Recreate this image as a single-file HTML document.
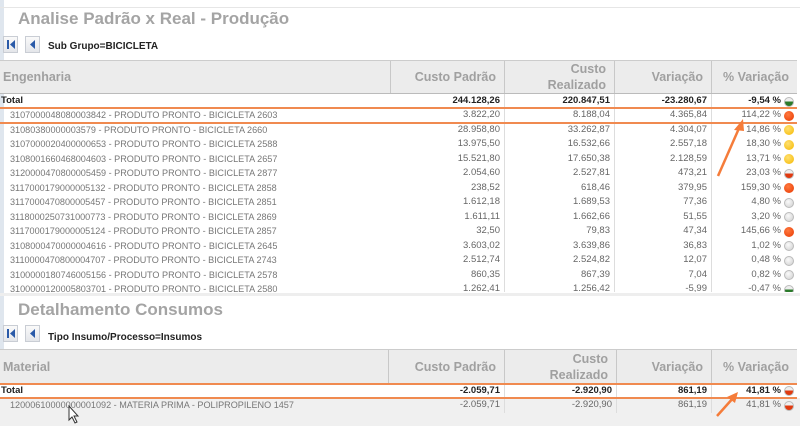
<!DOCTYPE html>
<html><head><meta charset="utf-8"><style>
*{margin:0;padding:0;box-sizing:border-box}
body{width:800px;height:426px;overflow:hidden;background:#fff;font-family:"Liberation Sans",sans-serif;position:relative;color:#666}
.a{position:absolute}
.title{font-family:"Liberation Sans",sans-serif;font-weight:bold;color:#a4a4a4;font-size:17px;letter-spacing:0}
.btn{position:absolute;width:15px;height:17px;border:1px solid #c9cdd4;background:linear-gradient(#fafafa,#e4e6ea)}
.lbl{position:absolute;font-family:"Liberation Sans",sans-serif;font-weight:bold;font-size:10px;color:#222}
.hdr{position:absolute;left:0;width:797px;background:#ececec;border-top:1px solid #ccc}
.h{position:absolute;top:0;height:100%;font-family:"Liberation Sans",sans-serif;font-weight:bold;color:#a0a0a0;font-size:12.5px;display:flex;align-items:center;justify-content:flex-end;padding-right:8px;text-align:right;line-height:16px;border-right:1px solid #c8c8c8}
.r{position:absolute;left:0;width:797px;height:14.5px;font-size:9.5px;line-height:14.5px}
.c{position:absolute;top:0;height:100%;text-align:right;border-right:1px solid #ddd;padding-right:4px;white-space:nowrap}
.n{left:2px;text-align:left;border:none;padding-left:8px;color:#777;font-size:9.1px}
.b{font-weight:bold;color:#222}
.dot{position:absolute;top:2.5px;right:3px;width:10px;height:10px;border-radius:50%}
.red{background:radial-gradient(circle at 40% 35%,#ff7a40,#e83800)}
.yel{background:radial-gradient(circle at 40% 35%,#ffe070,#f5b800)}
.gry{background:radial-gradient(circle at 40% 35%,#fafafa,#cfcfcf);border:1px solid #bbb}
.hr{background:linear-gradient(#eee 45%,#e03a10 45%);border:1px solid #bbb}
.hg{background:linear-gradient(#eee 45%,#2a7a2a 45%);border:1px solid #bbb}
</style></head><body>
<div class="a" style="left:0;top:0;width:4px;height:426px;background:#dfe6ee"></div>
<div class="a" style="left:0;top:7px;width:800px;height:1px;background:#e6e6e6"></div>
<div class="a title" style="left:18px;top:9px">Analise Padrão x Real - Produção</div>
<div class="btn" style="left:3px;top:36px"><svg width="13" height="15"><rect x="3" y="3" width="2" height="9" fill="#2a5aa8"/><path d="M11 3 L6 7.5 L11 12Z" fill="#2a5aa8"/></svg></div>
<div class="btn" style="left:25px;top:36px"><svg width="13" height="15"><path d="M9 3 L4 7.5 L9 12Z" fill="#2a5aa8"/></svg></div>
<div class="lbl" style="left:48px;top:41px">Sub Grupo=BICICLETA</div>

<div class="hdr" style="top:60px;height:33px">
<div class="h" style="left:0;width:391px;justify-content:flex-start;padding-left:3px">Engenharia</div>
<div class="h" style="left:391px;width:114px">Custo Padrão</div>
<div class="h" style="left:505px;width:110px">Custo<br>Realizado</div>
<div class="h" style="left:615px;width:97px">Variação</div>
<div class="h" style="left:712px;width:85px;border:none">% Variação</div>
</div>
<div class="a" style="left:0;top:93px;width:797px;height:1px;background:#bbb"></div>

<div class="a" style="left:0;top:94px;width:797px;height:198px;overflow:hidden">
<div class="r b" style="top:0"><div class="c n b" style="left:0;padding-left:1px;width:391px;color:#222;font-size:9.5px">Total</div><div class="c" style="left:391px;width:114px">244.128,26</div><div class="c" style="left:505px;width:110px">220.847,51</div><div class="c" style="left:615px;width:97px">-23.280,67</div><div class="c" style="left:712px;width:85px;padding-right:16px;border:none">-9,54 %</div><div class="dot hg"></div></div>
<div style="position:absolute;top:14px;left:0;width:797px">
<div class="r" style="top:0"><div class="c n" style="width:391px">3107000048080003842 - PRODUTO PRONTO - BICICLETA 2603</div><div class="c" style="left:391px;width:114px">3.822,20</div><div class="c" style="left:505px;width:110px">8.188,04</div><div class="c" style="left:615px;width:97px">4.365,84</div><div class="c" style="left:712px;width:85px;padding-right:16px;border:none">114,22 %</div><div class="dot red"></div></div>
<div class="r" style="top:14.5px"><div class="c n" style="width:391px">31080380000003579 - PRODUTO PRONTO - BICICLETA 2660</div><div class="c" style="left:391px;width:114px">28.958,80</div><div class="c" style="left:505px;width:110px">33.262,87</div><div class="c" style="left:615px;width:97px">4.304,07</div><div class="c" style="left:712px;width:85px;padding-right:16px;border:none">14,86 %</div><div class="dot yel"></div></div>
<div class="r" style="top:29px"><div class="c n" style="width:391px">3107000020400000653 - PRODUTO PRONTO - BICICLETA 2588</div><div class="c" style="left:391px;width:114px">13.975,50</div><div class="c" style="left:505px;width:110px">16.532,66</div><div class="c" style="left:615px;width:97px">2.557,18</div><div class="c" style="left:712px;width:85px;padding-right:16px;border:none">18,30 %</div><div class="dot yel"></div></div>
<div class="r" style="top:43.5px"><div class="c n" style="width:391px">3108001660468004603 - PRODUTO PRONTO - BICICLETA 2657</div><div class="c" style="left:391px;width:114px">15.521,80</div><div class="c" style="left:505px;width:110px">17.650,38</div><div class="c" style="left:615px;width:97px">2.128,59</div><div class="c" style="left:712px;width:85px;padding-right:16px;border:none">13,71 %</div><div class="dot yel"></div></div>
<div class="r" style="top:58px"><div class="c n" style="width:391px">3120000470800005459 - PRODUTO PRONTO - BICICLETA 2877</div><div class="c" style="left:391px;width:114px">2.054,60</div><div class="c" style="left:505px;width:110px">2.527,81</div><div class="c" style="left:615px;width:97px">473,21</div><div class="c" style="left:712px;width:85px;padding-right:16px;border:none">23,03 %</div><div class="dot hr"></div></div>
<div class="r" style="top:72.5px"><div class="c n" style="width:391px">3117000179000005132 - PRODUTO PRONTO - BICICLETA 2858</div><div class="c" style="left:391px;width:114px">238,52</div><div class="c" style="left:505px;width:110px">618,46</div><div class="c" style="left:615px;width:97px">379,95</div><div class="c" style="left:712px;width:85px;padding-right:16px;border:none">159,30 %</div><div class="dot red"></div></div>
<div class="r" style="top:87px"><div class="c n" style="width:391px">3117000470800005457 - PRODUTO PRONTO - BICICLETA 2851</div><div class="c" style="left:391px;width:114px">1.612,18</div><div class="c" style="left:505px;width:110px">1.689,53</div><div class="c" style="left:615px;width:97px">77,36</div><div class="c" style="left:712px;width:85px;padding-right:16px;border:none">4,80 %</div><div class="dot gry"></div></div>
<div class="r" style="top:101.5px"><div class="c n" style="width:391px">3118000250731000773 - PRODUTO PRONTO - BICICLETA 2869</div><div class="c" style="left:391px;width:114px">1.611,11</div><div class="c" style="left:505px;width:110px">1.662,66</div><div class="c" style="left:615px;width:97px">51,55</div><div class="c" style="left:712px;width:85px;padding-right:16px;border:none">3,20 %</div><div class="dot gry"></div></div>
<div class="r" style="top:116px"><div class="c n" style="width:391px">3117000179000005124 - PRODUTO PRONTO - BICICLETA 2857</div><div class="c" style="left:391px;width:114px">32,50</div><div class="c" style="left:505px;width:110px">79,83</div><div class="c" style="left:615px;width:97px">47,34</div><div class="c" style="left:712px;width:85px;padding-right:16px;border:none">145,66 %</div><div class="dot red"></div></div>
<div class="r" style="top:130.5px"><div class="c n" style="width:391px">3108000470000004616 - PRODUTO PRONTO - BICICLETA 2645</div><div class="c" style="left:391px;width:114px">3.603,02</div><div class="c" style="left:505px;width:110px">3.639,86</div><div class="c" style="left:615px;width:97px">36,83</div><div class="c" style="left:712px;width:85px;padding-right:16px;border:none">1,02 %</div><div class="dot gry"></div></div>
<div class="r" style="top:145px"><div class="c n" style="width:391px">3110000470800004707 - PRODUTO PRONTO - BICICLETA 2743</div><div class="c" style="left:391px;width:114px">2.512,74</div><div class="c" style="left:505px;width:110px">2.524,82</div><div class="c" style="left:615px;width:97px">12,07</div><div class="c" style="left:712px;width:85px;padding-right:16px;border:none">0,48 %</div><div class="dot gry"></div></div>
<div class="r" style="top:159.5px"><div class="c n" style="width:391px">3100000180746005156 - PRODUTO PRONTO - BICICLETA 2578</div><div class="c" style="left:391px;width:114px">860,35</div><div class="c" style="left:505px;width:110px">867,39</div><div class="c" style="left:615px;width:97px">7,04</div><div class="c" style="left:712px;width:85px;padding-right:16px;border:none">0,82 %</div><div class="dot gry"></div></div>
<div class="r" style="top:174px"><div class="c n" style="width:391px">3100000120005803701 - PRODUTO PRONTO - BICICLETA 2580</div><div class="c" style="left:391px;width:114px">1.262,41</div><div class="c" style="left:505px;width:110px">1.256,42</div><div class="c" style="left:615px;width:97px">-5,99</div><div class="c" style="left:712px;width:85px;padding-right:16px;border:none">-0,47 %</div><div class="dot hg"></div></div>
</div></div>
<div class="a" style="left:0;top:107px;width:797px;height:1.5px;background:#f08a50"></div>
<div class="a" style="left:0;top:122px;width:797px;height:1.5px;background:#f08a50"></div>
<div class="a" style="left:0;top:293px;width:800px;height:3px;background:#eee"></div>

<div class="a title" style="left:18px;top:300px">Detalhamento Consumos</div>
<div class="btn" style="left:3px;top:325px"><svg width="13" height="15"><rect x="3" y="3" width="2" height="9" fill="#2a5aa8"/><path d="M11 3 L6 7.5 L11 12Z" fill="#2a5aa8"/></svg></div>
<div class="btn" style="left:25px;top:325px"><svg width="13" height="15"><path d="M9 3 L4 7.5 L9 12Z" fill="#2a5aa8"/></svg></div>
<div class="lbl" style="left:48px;top:332px">Tipo Insumo/Processo=Insumos</div>

<div class="a" style="left:0;top:398px;width:800px;height:28px;background:#f0f0f0"></div>
<div class="hdr" style="top:349px;height:34px">
<div class="h" style="left:0;width:389px;justify-content:flex-start;padding-left:3px">Material</div>
<div class="h" style="left:389px;width:116px">Custo Padrão</div>
<div class="h" style="left:505px;width:112px">Custo<br>Realizado</div>
<div class="h" style="left:617px;width:95px">Variação</div>
<div class="h" style="left:712px;width:85px;border:none">% Variação</div>
</div>
<div class="r b" style="top:383.5px;background:#fff"><div class="c n b" style="left:0;padding-left:1px;width:389px;color:#222;font-size:9.5px">Total</div><div class="c" style="left:389px;width:116px">-2.059,71</div><div class="c" style="left:505px;width:112px">-2.920,90</div><div class="c" style="left:617px;width:95px">861,19</div><div class="c" style="left:712px;width:85px;padding-right:16px;border:none">41,81 %</div><div class="dot hr"></div></div>
<div class="r" style="top:398px"><div class="c n" style="width:389px">12000610000000001092 - MATERIA PRIMA - POLIPROPILENO 1457</div><div class="c" style="left:389px;width:116px">-2.059,71</div><div class="c" style="left:505px;width:112px">-2.920,90</div><div class="c" style="left:617px;width:95px">861,19</div><div class="c" style="left:712px;width:85px;padding-right:16px;border:none">41,81 %</div><div class="dot hr"></div></div>
<div class="a" style="left:0;top:383px;width:797px;height:1.5px;background:#f08a50"></div>
<div class="a" style="left:0;top:397px;width:797px;height:1.5px;background:#f08a50"></div>

<svg class="a" style="left:0;top:0" width="800" height="426">
<path d="M718 176 L740 126" stroke="#f57c3a" stroke-width="2.5" fill="none"/>
<path d="M743 119 L734 130 L744 131Z" fill="#f57c3a"/>
<path d="M717 416 L734 397" stroke="#f57c3a" stroke-width="2.5" fill="none"/>
<path d="M738 392 L727 397 L735 403Z" fill="#f57c3a"/>
<path d="M69 406 L69 420 L72 417 L75 423 L77 422 L74 416 L78 416Z" fill="#fff" stroke="#333" stroke-width="1"/>
</svg>
</body></html>
